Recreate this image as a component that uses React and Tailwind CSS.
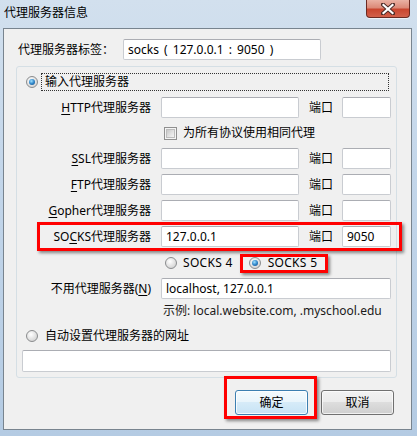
import React from "react";

const inputCls =
  "h-[21px] bg-white border border-[#c9ccd1] border-t-[#abadb3] rounded-[2px] flex items-center pl-[4px] text-[12px] text-black";

function Radio({ checked }) {
  return (
    <span className="relative w-[12px] h-[12px] rounded-full border border-[#8a8c8e] bg-[radial-gradient(circle_at_40%_35%,#ffffff_0%,#e6e6e6_45%,#c9c9c9_100%)] flex items-center justify-center shrink-0">
      {checked && (
        <span className="w-[6px] h-[6px] rounded-full bg-[radial-gradient(circle_at_40%_35%,#9fe0ff_0%,#2f86c9_50%,#14467e_100%)]" />
      )}
    </span>
  );
}

function Checkbox() {
  return (
    <span className="w-[13px] h-[13px] border border-[#8f8f8f] bg-[#f4f4f4] flex items-center justify-center shrink-0">
      <span className="w-[9px] h-[9px] bg-[linear-gradient(135deg,#c8c8c8_0%,#e4e4e4_60%,#f4f4f4_100%)] border border-[#bdbdbd]" />
    </span>
  );
}

function Row({ label, value = "", port = "", mt = "mt-[5px]" }) {
  return (
    <div className={`${mt} flex items-center h-[21px]`}>
      <div className="w-[134px] text-right whitespace-nowrap">{label}</div>
      <div className={`${inputCls} ml-[10px] w-[138px]`}>{value}</div>
      <div className="ml-[10px] w-[24px] whitespace-nowrap">端口</div>
      <div className={`${inputCls} ml-[9px] w-[49px]`}>{port}</div>
    </div>
  );
}

const U = ({ children }) => (
  <span className="underline decoration-1 underline-offset-[2px]">{children}</span>
);

export default function App() {
  return (
    <div className="relative w-[417px] h-[436px] overflow-hidden bg-[linear-gradient(180deg,#d2e0ee_0%,#c3d6ea_40%,#b4cbe3_100%)] font-['Noto_Sans','Noto_Sans_CJK_SC',sans-serif] text-[12px] leading-[16px] text-black flex flex-col">
      {/* title bar */}
      <div className="h-[28px] shrink-0 flex items-start">
        <div className="pl-[4px] pt-[5px] text-[12px] leading-[16px] text-black">
          代理服务器信息
        </div>
      </div>
      {/* close button */}
      <div className="absolute right-[7px] top-0 w-[44px] h-[18px] rounded-b-[4px] border border-t-0 border-[#6b2a22] bg-[linear-gradient(180deg,#eab2a4_0%,#dc8a78_45%,#c9462f_55%,#d2604a_100%)] flex items-center justify-center shadow-[0_1px_0_rgba(255,255,255,0.6)]">
        <svg width="14" height="12" viewBox="0 0 14 12">
          <path d="M2 1.5 L12 10.5 M12 1.5 L2 10.5" stroke="#4a2a26" strokeWidth="4" strokeLinecap="square" />
          <path d="M2.5 2 L11.5 10 M11.5 2 L2.5 10" stroke="#ffffff" strokeWidth="2.2" strokeLinecap="square" />
        </svg>
      </div>

      {/* client area */}
      <div className="ml-[3px] mr-[5px] h-[402px] shrink-0 border border-[#78848f] bg-[#f0f0f0] flex flex-col">
        <div className="mt-[10px] flex items-center h-[21px]">
          <div className="w-[119px] pl-[14px] whitespace-nowrap">代理服务器标签：</div>
          <div className={`${inputCls} w-[198px] whitespace-nowrap [word-spacing:2px]`}>socks ( 127.0.0.1 : 9050 )</div>
        </div>

        {/* group box */}
        <div className="mt-[6px] ml-[12px] w-[381px] h-[312px] border border-[#d5dfe5] rounded-[3px] flex flex-col">
          <div className="mt-[6px] ml-[9px] flex items-center h-[18px]">
            <Radio checked />
            <div className="ml-[3px] w-[348px] h-[18px] border border-dotted border-[#333] pl-[3px] flex items-center">
              输入代理服务器
            </div>
          </div>

          <Row label={<><U>H</U>TTP代理服务器</>} mt="mt-[6px]" />

          <div className="mt-[5px] h-[20px] flex items-center">
            <span className="ml-[147px]">
              <Checkbox />
            </span>
            <span className="ml-[6px]">为所有协议使用相同代理</span>
          </div>

          <Row label={<><U>S</U>SL代理服务器</>} />
          <Row label={<><U>F</U>TP代理服务器</>} />
          <Row label={<><U>G</U>opher代理服务器</>} />
          <Row label={<>SO<U>C</U>KS代理服务器</>} value="127.0.0.1" port="9050" />

          <div className="mt-[6px] h-[20px] flex items-center">
            <span className="ml-[148px]">
              <Radio />
            </span>
            <span className="ml-[6px] tracking-[0.3px]">SOCKS 4</span>
            <span className="ml-[16px]">
              <Radio checked />
            </span>
            <span className="ml-[7px] tracking-[0.3px]">SOCKS 5</span>
          </div>

          <div className="mt-[5px] flex items-center h-[21px]">
            <div className="w-[134px] text-right whitespace-nowrap">
              不用代理服务器(<U>N</U>)
            </div>
            <div className={`${inputCls} ml-[10px] w-[230px]`}>localhost, 127.0.0.1</div>
          </div>

          <div className="mt-[2px] h-[20px] flex items-center pl-[146px] text-[#1a1a1a] whitespace-nowrap">
            示例: local.website.com, .myschool.edu
          </div>

          <div className="mt-[5px] h-[20px] flex items-center">
            <span className="ml-[9px]">
              <Radio />
            </span>
            <span className="ml-[7px]">自动设置代理服务器的网址</span>
          </div>

          <div className="mt-[4px] ml-[5px] w-[369px] h-[22px] bg-white border border-[#c9ccd1] border-t-[#abadb3] rounded-[2px]" />
        </div>

        {/* buttons */}
        <div className="mt-[12px] flex justify-end pr-[17px] gap-[13px]">
          <button className="w-[73px] h-[25px] rounded-[3px] border border-[#3c7fb1] bg-[linear-gradient(180deg,#f4fafd_0%,#e8f4fb_50%,#d6ebf8_50%,#c7e3f5_100%)] shadow-[inset_0_0_0_1px_rgba(255,255,255,0.8)] text-[12px] leading-[16px] text-black">
            确定
          </button>
          <button className="w-[73px] h-[25px] rounded-[3px] border border-[#707070] bg-[linear-gradient(180deg,#f2f2f2_0%,#ebebeb_50%,#dddddd_50%,#cfcfcf_100%)] shadow-[inset_0_0_0_1px_rgba(255,255,255,0.7)] text-[12px] leading-[16px] text-black">
            取消
          </button>
        </div>
      </div>

      {/* red annotation boxes */}
      <div className="absolute left-[37px] top-[222px] w-[365px] h-[29px] border-[3px] border-[#ff0000] shadow-[2px_2px_3px_rgba(0,0,0,0.45)] pointer-events-none" />
      <div className="absolute left-[240px] top-[254px] w-[88px] h-[19px] border-[3px] border-[#ff0000] shadow-[2px_2px_3px_rgba(0,0,0,0.45)] pointer-events-none" />
      <div className="absolute left-[224px] top-[376px] w-[93px] h-[43px] border-[3px] border-[#ff0000] shadow-[2px_2px_3px_rgba(0,0,0,0.45)] pointer-events-none" />
    </div>
  );
}
